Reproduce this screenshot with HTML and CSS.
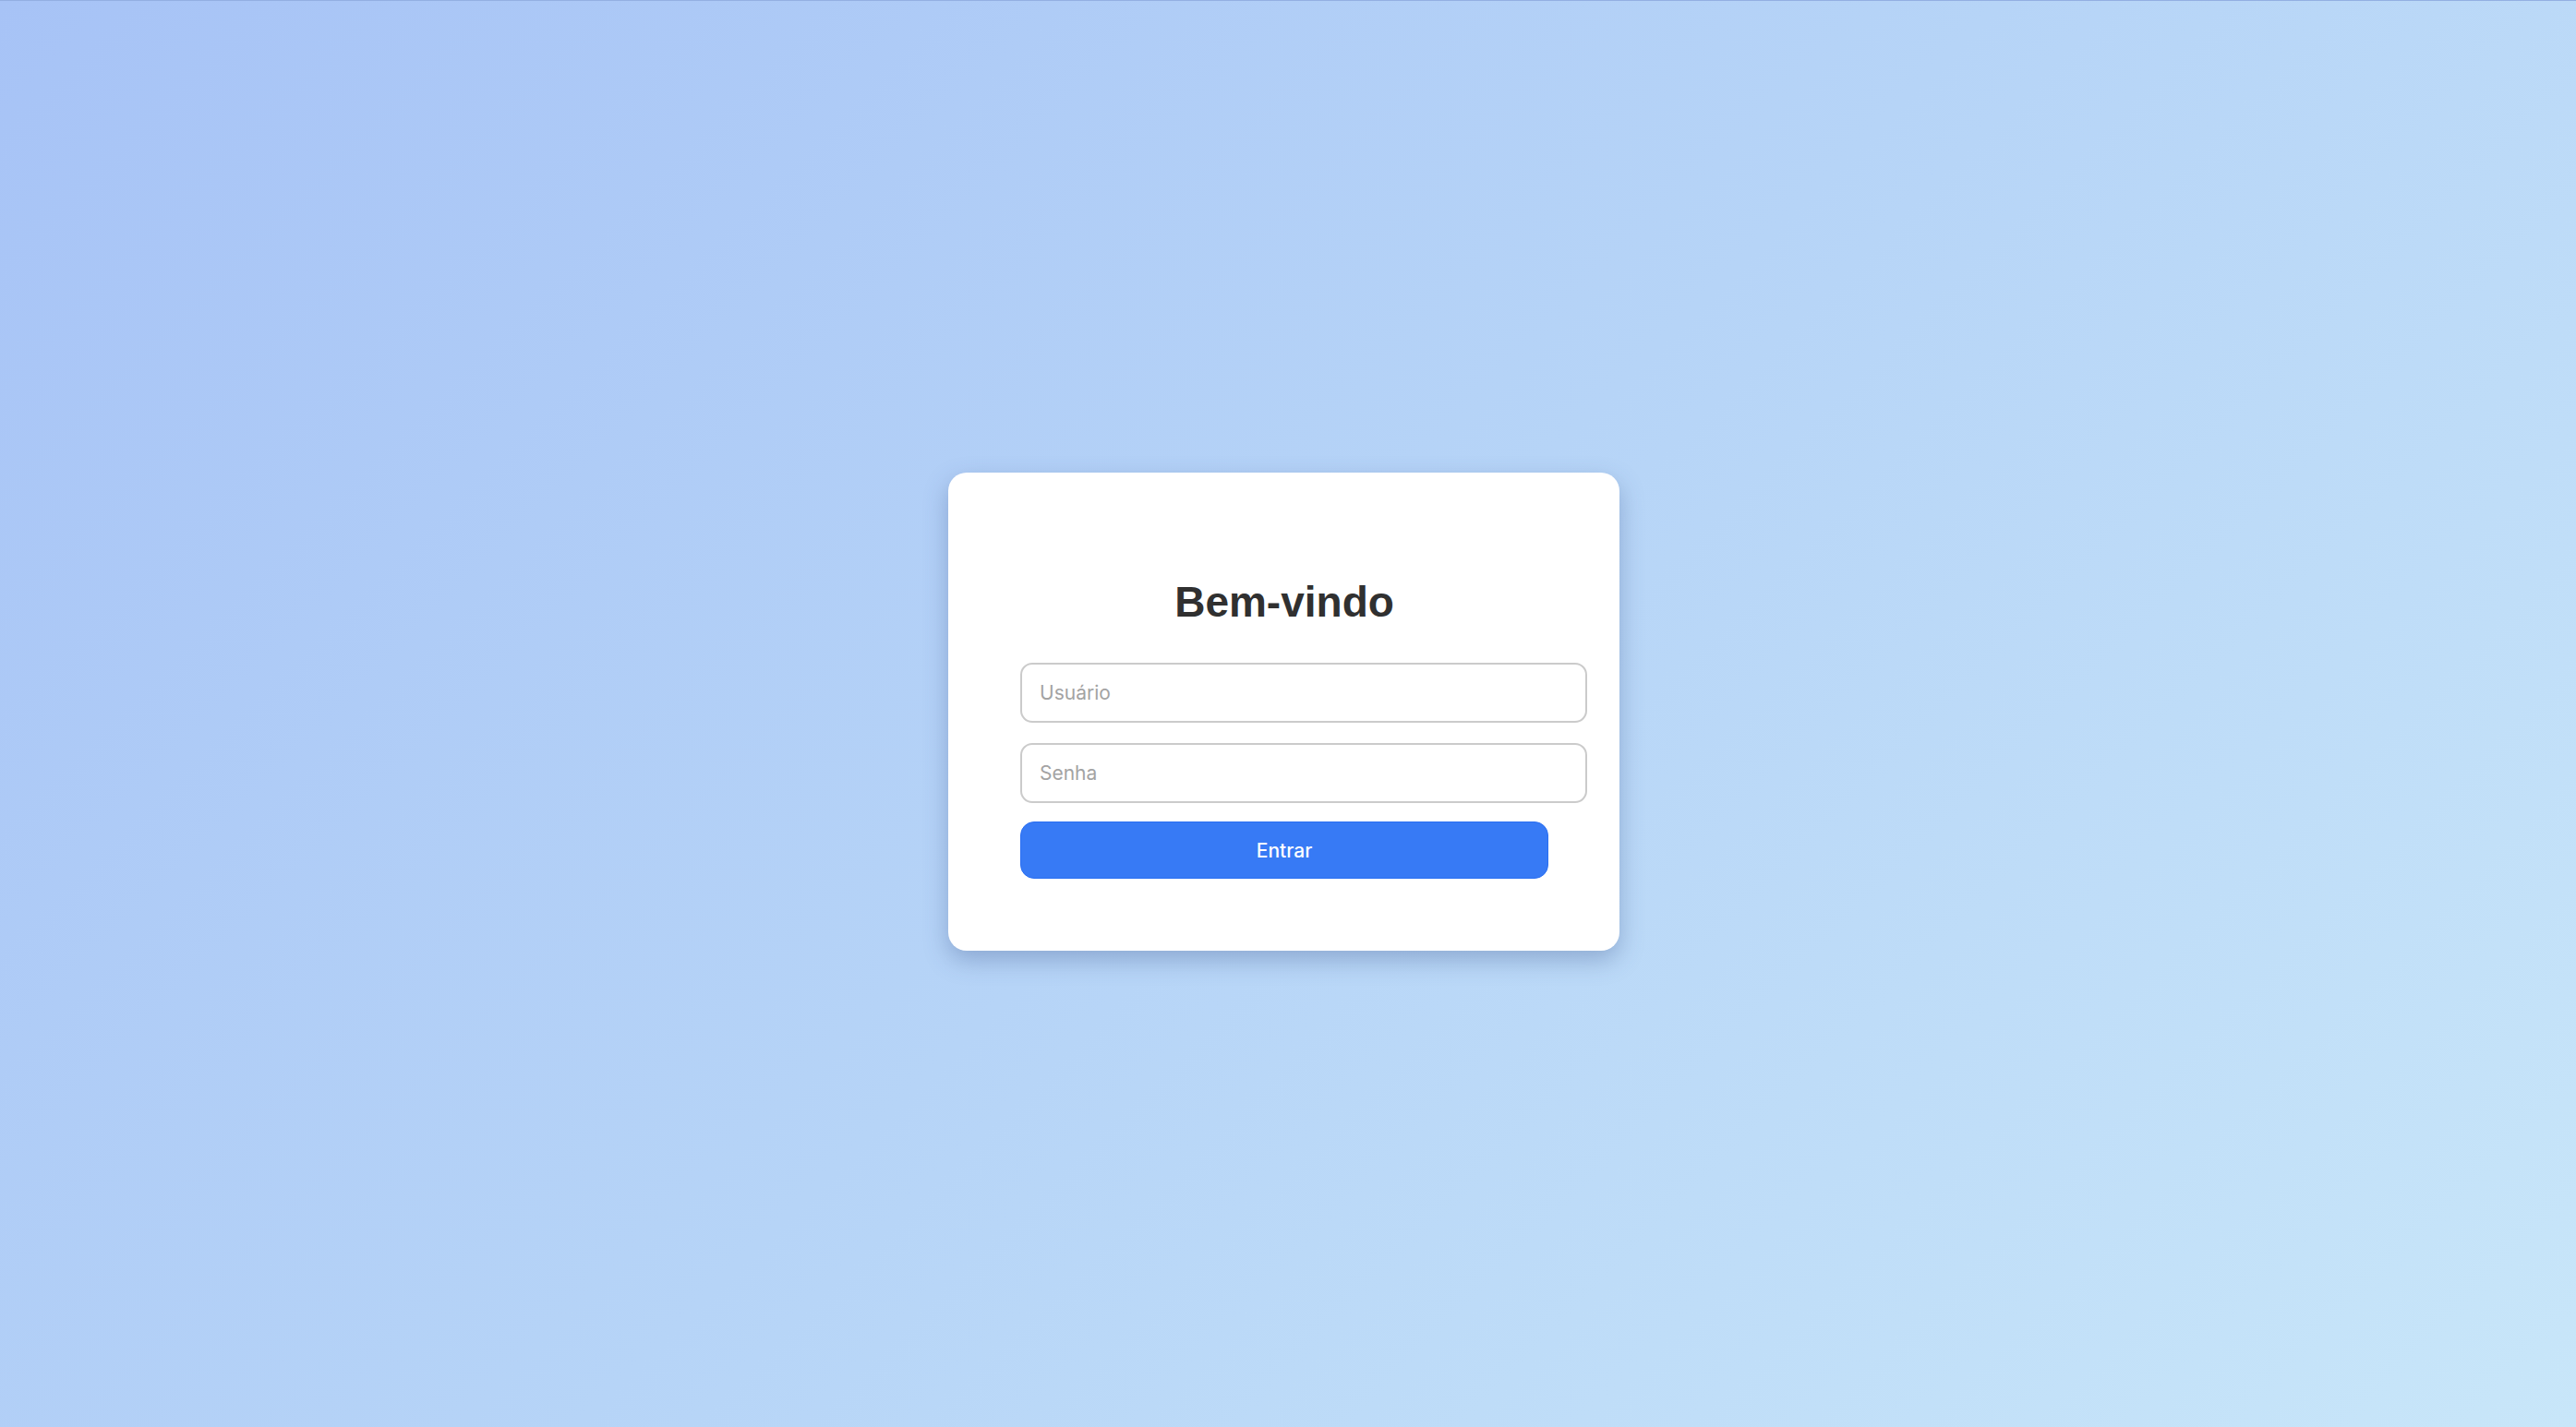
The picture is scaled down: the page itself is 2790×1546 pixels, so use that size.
FILE: index.html
```html
<!DOCTYPE html>
<html lang="pt-BR">
<head>
<meta charset="utf-8">
<title>Login</title>
<link rel="stylesheet" href="styles.css">
</head>
<body>
<main class="page">
  <form class="login-card">
    <h2 class="login-title">Bem-vindo</h2>
    <input class="login-input" type="text" placeholder="Usuário">
    <input class="login-input login-input--second" type="password" placeholder="Senha">
    <button class="login-button" type="button">Entrar</button>
  </form>
</main>
</body>
</html>
```

FILE: styles.css
```css
html, body {
  margin: 0;
  padding: 0;
  height: 100%;
}

body {
  background: linear-gradient(135deg, #a7c3f6 0%, #b6d4f7 50%, #c8e6f9 100%);
  font-family: "Inter", "Noto Sans", "Liberation Sans", sans-serif;
  border-top: 1px solid #93afe2;
  box-sizing: border-box;
}

.page {
  min-height: 100%;
  display: flex;
  align-items: center;
  justify-content: center;
  padding: 0 9px 5px 0;
  box-sizing: border-box;
}

.login-card {
  width: 572px;
  padding: 77px 77px 78px 78px;
  background: #ffffff;
  border-radius: 20px;
  box-shadow: 0 10px 26px rgba(60, 85, 140, 0.35);
  display: flex;
  flex-direction: column;
  align-items: flex-start;
}

.login-title {
  align-self: stretch;
  margin: 37px 0 40px;
  font-family: "Liberation Sans", Arial, sans-serif;
  font-weight: bold;
  font-size: 46px;
  line-height: 52px;
  color: #303030;
  text-align: center;
}

.login-input {
  box-sizing: content-box;
  width: 100%;
  height: 61px;
  padding: 0 19px 0 19px;
  border: 2px solid #cbcbcb;
  border-radius: 13px;
  background: #ffffff;
  font-family: "Inter", "Noto Sans", sans-serif;
  font-size: 21px;
  color: #333;
  outline: none;
  margin: 0;
}

.login-input::placeholder {
  color: #a3a3a3;
}

.login-input--second {
  margin-top: 22px;
}

.login-button {
  margin-top: 20px;
  width: 100%;
  height: 62px;
  border: 1.5px solid #2a6ff2;
  border-radius: 15px;
  background: #377af5;
  color: #ffffff;
  font-family: "Inter", "Noto Sans", sans-serif;
  font-weight: 500;
  font-size: 21px;
  cursor: pointer;
}
```
